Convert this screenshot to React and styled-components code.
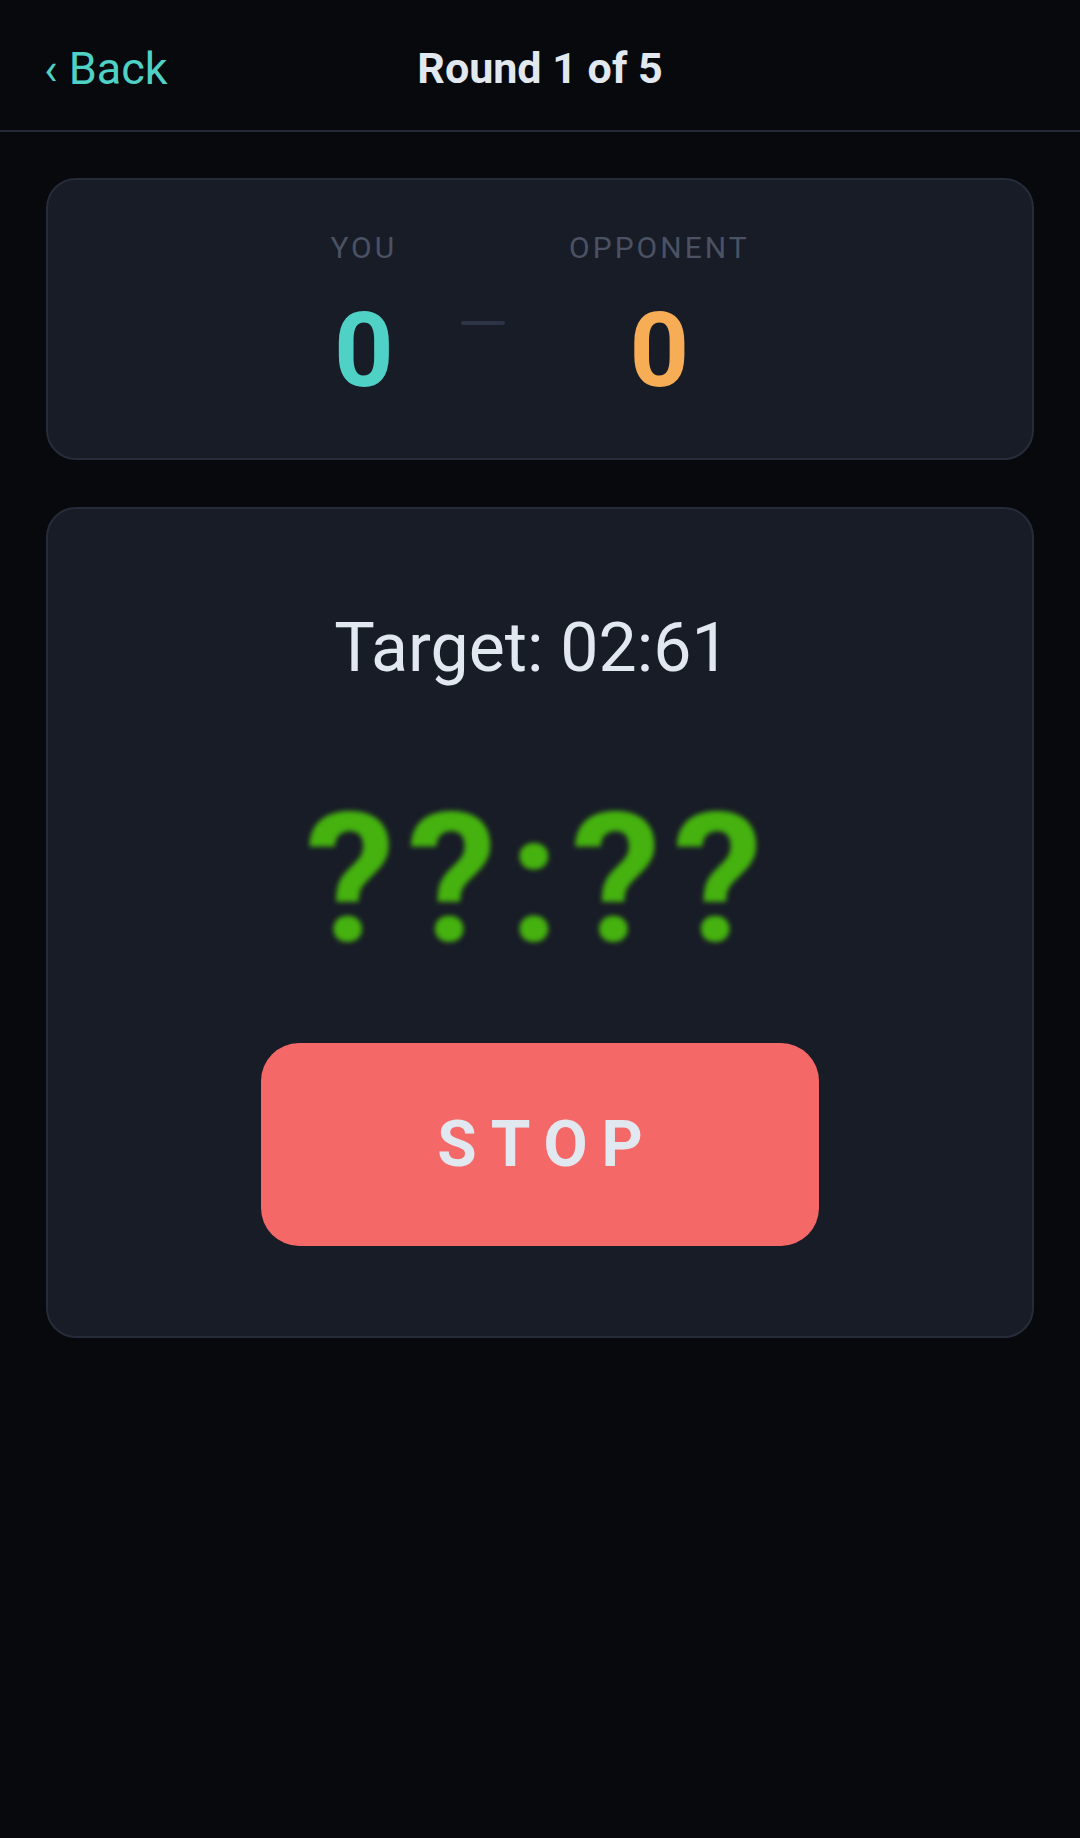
import React from 'react';
import styled, { createGlobalStyle } from 'styled-components';

const GlobalStyle = createGlobalStyle`
  html, body {
    margin: 0;
    padding: 0;
    background: #07090d;
  }

  body {
    font-family: Roboto, 'Noto Sans', sans-serif;
    color: #e2e8f0;
  }
`;

const Screen = styled.div`
  min-height: 1838px;
  background: #07090d;
`;

const Header = styled.header`
  display: grid;
  grid-template-columns: 1fr auto 1fr;
  align-items: center;
  height: 124px;
  padding: 6px 44px 0;
  border-bottom: 2px solid #232937;
  background: #07090d;
`;

const BackLink = styled.a`
  justify-self: start;
  color: #4fd1c5;
  font-size: 45px;
  line-height: 1;
  text-decoration: none;
  cursor: pointer;
`;

const Title = styled.h1`
  margin: 0;
  font-size: 43px;
  font-weight: 700;
  line-height: 1;
  color: #e2e8f0;
`;

const Content = styled.main`
  display: flex;
  flex-direction: column;
  gap: 47px;
  padding: 46px 46px;
`;

const Card = styled.section`
  background: #181c27;
  border: 2px solid #262c3a;
  border-radius: 30px;
  padding: ${({ $pad }) => $pad};
  display: flex;
  flex-direction: column;
  align-items: center;
`;

const Scoreboard = styled.div`
  display: flex;
  align-items: center;
  gap: 64px;
`;

const Side = styled.div`
  display: flex;
  flex-direction: column;
  align-items: center;
  gap: 36px;
`;

const Label = styled.div`
  font-size: 30px;
  line-height: 1;
  letter-spacing: 3px;
  color: #4a5263;
  text-transform: uppercase;
`;

const Score = styled.div`
  font-size: 104px;
  font-weight: 700;
  line-height: 1;
  color: ${({ $color }) => $color};
`;

const Dash = styled.div`
  width: 44px;
  height: 4px;
  margin-top: 10px;
  background: #2d3447;
  border-radius: 2px;
`;

const Target = styled.div`
  padding-right: 16px;
  font-size: 68px;
  line-height: 1;
  color: #e2e8f0;
`;

const Hidden = styled.div`
  margin-top: 108px;
  font-size: 180px;
  font-weight: 700;
  line-height: 1;
  letter-spacing: 12px;
  color: #45b20f;
  filter: blur(2.5px);
`;

const StopButton = styled.button`
  margin-top: 73px;
  width: 558px;
  height: 203px;
  border: none;
  border-radius: 38px;
  background: #f56868;
  color: #e2e8f0;
  font-family: Roboto, sans-serif;
  font-size: 64px;
  font-weight: 700;
  letter-spacing: 14px;
  text-indent: 14px;
  cursor: pointer;
`;

export default function App() {
  return (
    <>
      <GlobalStyle />
      <Screen>
        <Header>
          <BackLink>‹ Back</BackLink>
          <Title>Round 1 of 5</Title>
          <span />
        </Header>

        <Content>
          <Card $pad="53px 40px 55px">
            <Scoreboard>
              <Side>
                <Label>You</Label>
                <Score $color="#4fd1c5">0</Score>
              </Side>
              <Dash />
              <Side>
                <Label>Opponent</Label>
                <Score $color="#f6ad55">0</Score>
              </Side>
            </Scoreboard>
          </Card>

          <Card $pad="105px 40px 90px">
            <Target>Target: 02:61</Target>
            <Hidden>??:??</Hidden>
            <StopButton>STOP</StopButton>
          </Card>
        </Content>
      </Screen>
    </>
  );
}
